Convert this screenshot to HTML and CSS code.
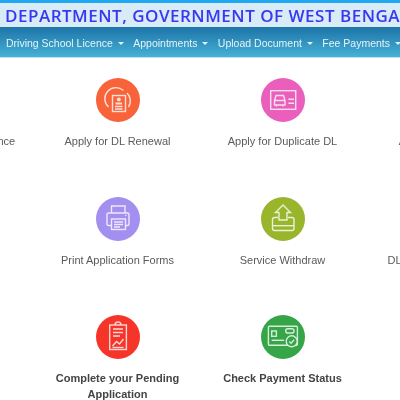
FILE: index.html

```html
<!DOCTYPE html>
<html lang="en">
<head>
  <meta charset="UTF-8" />
  <meta name="viewport" content="width=device-width, initial-scale=1.0"/>
  <title>Transport Department</title>
  <link rel="stylesheet" href="styles.css">
</head>
<body>
  <header class="title-bar">
    <h1>DEPARTMENT, GOVERNMENT OF WEST BENGAL</h1>
  </header>
  <nav class="main-nav">
    <a href="#">Driving School Licence <span class="caret"></span></a>
    <a href="#">Appointments <span class="caret"></span></a>
    <a href="#">Upload Document <span class="caret"></span></a>
    <a href="#">Fee Payments <span class="caret"></span></a>
  </nav>

  <main class="services">
    <div class="service">
      <span class="icon blue"></span>
      <p>Apply for Learner Licence</p>
    </div>
    <div class="service">
      <span class="icon orange">
        <svg viewBox="0 0 44 44">
          <path d="M12.500 29a11 11 0 0 1 15-16.500M31 15a11 11 0 0 1 1.500 14"/>
          <rect x="16.500" y="17.500" width="13" height="16"/>
          <circle cx="22.800" cy="21.500" r="2" class="solid"/>
          <path d="M19.500 25.500h6.500" class="thick"/>
          <path d="M19 28.500h7.500M19 31h7.500"/>
        </svg>
      </span>
      <p>Apply for DL Renewal</p>
    </div>
    <div class="service">
      <span class="icon pink">
        <svg viewBox="0 0 44 44">
          <rect x="9.700" y="12.700" width="25" height="18.600"/>
          <path d="M13.500 22.500l1.500-5h7.500l1.500 5v4.500h-10.500zM13.500 22.500h10.500"/>
          <path d="M15.500 27v1.500M22 27v1.500"/>
          <path d="M27.400 21.300h5.600M27.400 25.300h5.600"/>
        </svg>
      </span>
      <p>Apply for Duplicate DL</p>
    </div>
    <div class="service">
      <span class="icon blue"></span>
      <p>Apply for DL Extract</p>
    </div>

    <div class="service">
      <span class="icon blue"></span>
      <p>Application Status</p>
    </div>
    <div class="service">
      <span class="icon purple">
        <svg viewBox="0 0 44 44">
          <path d="M15.500 16V9h13.500v7"/>
          <path d="M15.500 28.500h-3a1.500 1.500 0 0 1-1.500-1.500v-9.500a1.500 1.500 0 0 1 1.500-1.500h19a1.500 1.500 0 0 1 1.500 1.500v9.500a1.500 1.500 0 0 1-1.500 1.500h-2"/>
          <rect x="15.500" y="22" width="14" height="10.500"/>
          <path d="M18 25h9M18 27.500h9M18 30h6"/>
          <circle cx="29.700" cy="18.500" r=".8" class="solid"/>
        </svg>
      </span>
      <p>Print Application Forms</p>
    </div>
    <div class="service">
      <span class="icon green">
        <svg viewBox="0 0 44 44">
          <path d="M22 8l7.500 7.500h-3.500V23h-8v-7.500h-3.500z"/>
          <path d="M17 20.500h-3.500a2 2 0 0 0-2 2v9a2 2 0 0 0 2 2h17.500a2 2 0 0 0 2-2v-9a2 2 0 0 0-2-2H27"/>
          <path d="M11.500 28.700h21.500"/>
        </svg>
      </span>
      <p>Service Withdraw</p>
    </div>
    <div class="service">
      <span class="icon blue"></span>
      <p>DL Application Summary</p>
    </div>

    <div class="service">
      <span class="icon red"></span>
      <p class="strong">Renew</p>
    </div>
    <div class="service">
      <span class="icon red">
        <svg viewBox="0 0 44 44">
          <rect x="13.700" y="10" width="16.700" height="24.500"/>
          <path d="M19 10a3 3 0 0 1 6 0"/>
          <path d="M17 14h10M17 17.500h10M17 21h7"/>
          <path d="M16.500 31l4-4.500 3 2.500 4-5"/>
          <path d="M16.500 32.500h11"/>
        </svg>
      </span>
      <p class="strong">Complete your Pending Application</p>
    </div>
    <div class="service">
      <span class="icon dark-green">
        <svg viewBox="0 0 44 44">
          <rect x="7.400" y="11.300" width="29" height="19" rx="1"/>
          <rect x="10.700" y="16" width="4.700" height="5.300"/>
          <rect x="24.700" y="13.700" width="8.300" height="4.300" rx="2.100"/>
          <path d="M10.700 25.300H23"/>
          <circle cx="30.700" cy="26.300" r="5.500" class="cover"/>
          <path d="M28.300 26.500l1.800 1.800 3-3.500"/>
        </svg>
      </span>
      <p class="strong">Check Payment Status</p>
    </div>
  </main>
</body>
</html>
```

FILE: styles.css

```css
html, body { height: 100%; }
body { margin: 0; overflow: hidden; font-family: "Liberation Sans", Arial, sans-serif; background: #fff; }

.title-bar { height: 24px; background: #d8ebf6; border-top: 3px solid #1fa9f2; overflow: hidden; }
.title-bar h1 { margin: 0; padding: 1px 0 0 5px; font-family: "Open Sans", sans-serif; font-size: 17px; font-weight: 600; line-height: 24px; letter-spacing: 0.5px; white-space: nowrap; color: #3838f2; filter: blur(.35px); }

.main-nav { display: flex; gap: 9.5px; height: 29px; padding: 1px 0 0 6px; align-items: center; white-space: nowrap; background: linear-gradient(#1d74a8, #46b1d6); border-bottom: 1px solid #bfe3f0; }
.main-nav a { color: #e6f3f8; font-size: 10.5px; text-decoration: none; filter: blur(.3px); }
.caret { display: inline-block; margin-left: 2px; vertical-align: middle; border-top: 3px solid #e6f3f8; border-left: 3px solid transparent; border-right: 3px solid transparent; }

.services { display: grid; grid-template-columns: repeat(4, 165px); grid-auto-rows: 118.5px; width: 660px; margin-left: -130px; padding-top: 20px; }
.service { display: flex; flex-direction: column; align-items: center; text-align: center; }
.service p { margin: 11px 0 0; padding: 0 10px; font-size: 11px; line-height: 16px; color: #5a5a5a; filter: blur(.3px); }
.service p.strong { font-weight: bold; color: #444; }

.icon { display: block; width: 44px; height: 44px; border-radius: 50%; }
.icon svg { display: block; width: 44px; height: 44px; fill: none; stroke: #fff; stroke-width: 1.4; opacity: .8; filter: blur(.35px); }
.icon svg .solid { fill: #fff; stroke: none; }
.icon svg .thick { stroke-width: 2; }
.orange { background: #f8633a; }
.pink { background: #e95fbb; }
.purple { background: #a28ff0; }
.green { background: #99b52c; }
.red { background: #f5352a; }
.blue { background: #4aa3df; }
.dark-green { background: #35a548; }
.dark-green svg .cover { fill: #35a548; }
```
